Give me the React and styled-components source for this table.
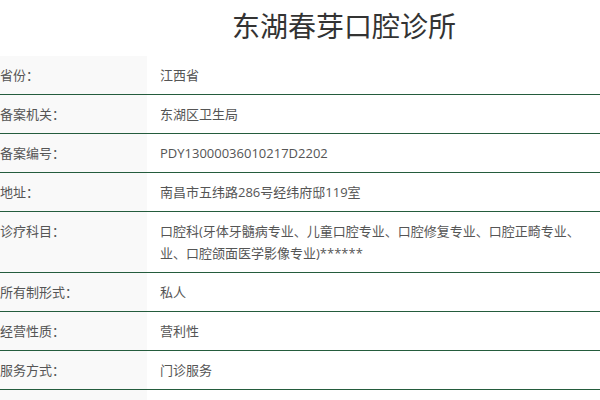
import React from 'react';
import styled, { createGlobalStyle } from 'styled-components';

const rows = [
  { label: '省份：', value: '江西省' },
  { label: '备案机关：', value: '东湖区卫生局' },
  { label: '备案编号：', value: 'PDY13000036010217D2202' },
  { label: '地址：', value: '南昌市五纬路286号经纬府邸119室' },
  {
    label: '诊疗科目：',
    lines: [
      '口腔科(牙体牙髓病专业、儿童口腔专业、口腔修复专业、口腔正畸专业、',
      '业、口腔颌面医学影像专业)******'
    ]
  },
  { label: '所有制形式：', value: '私人' },
  { label: '经营性质：', value: '营利性' },
  { label: '服务方式：', value: '门诊服务' },
  { label: '', value: '' }
];

export default function App() {
  return (
    <>
      <GlobalStyle />
      <Page>
        <Title>东湖春芽口腔诊所</Title>
        <Table>
          {rows.map((row, i) => (
            <Row key={i}>
              <Label>{row.label}</Label>
              <Value>
                {row.lines
                  ? row.lines.map(line => <Line key={line}>{line}</Line>)
                  : row.value}
              </Value>
            </Row>
          ))}
        </Table>
      </Page>
    </>
  );
}

const GlobalStyle = createGlobalStyle`
  html, body {
    margin: 0;
    padding: 0;
    background: #fff;
    overflow: hidden;
  }
  body {
    font-family: "Open Sans", "Noto Sans CJK SC", sans-serif;
  }
`;

const Page = styled.div`
  width: 708px;
  margin-left: -10px;
`;

const Title = styled.h1`
  margin: 0 0 6px 0;
  height: 50px;
  line-height: 50px;
  text-align: center;
  font-size: 28px;
  font-weight: 400;
  color: #333;
  font-family: "Noto Sans CJK SC", sans-serif;
`;

const Table = styled.div`
  display: flex;
  flex-direction: column;
`;

const Row = styled.div`
  display: grid;
  grid-template-columns: 157px 1fr;
  border-bottom: 1px solid #245c3d;
  font-size: 13px;
  line-height: 22px;
  color: #555;
`;

const Label = styled.div`
  background: #f9f9f9;
  padding: 8px 0 8px 10px;
`;

const Value = styled.div`
  padding: 8px 0 8px 13px;
  min-height: 22px;
  overflow: hidden;
`;

const Line = styled.div`
  white-space: nowrap;
`;
